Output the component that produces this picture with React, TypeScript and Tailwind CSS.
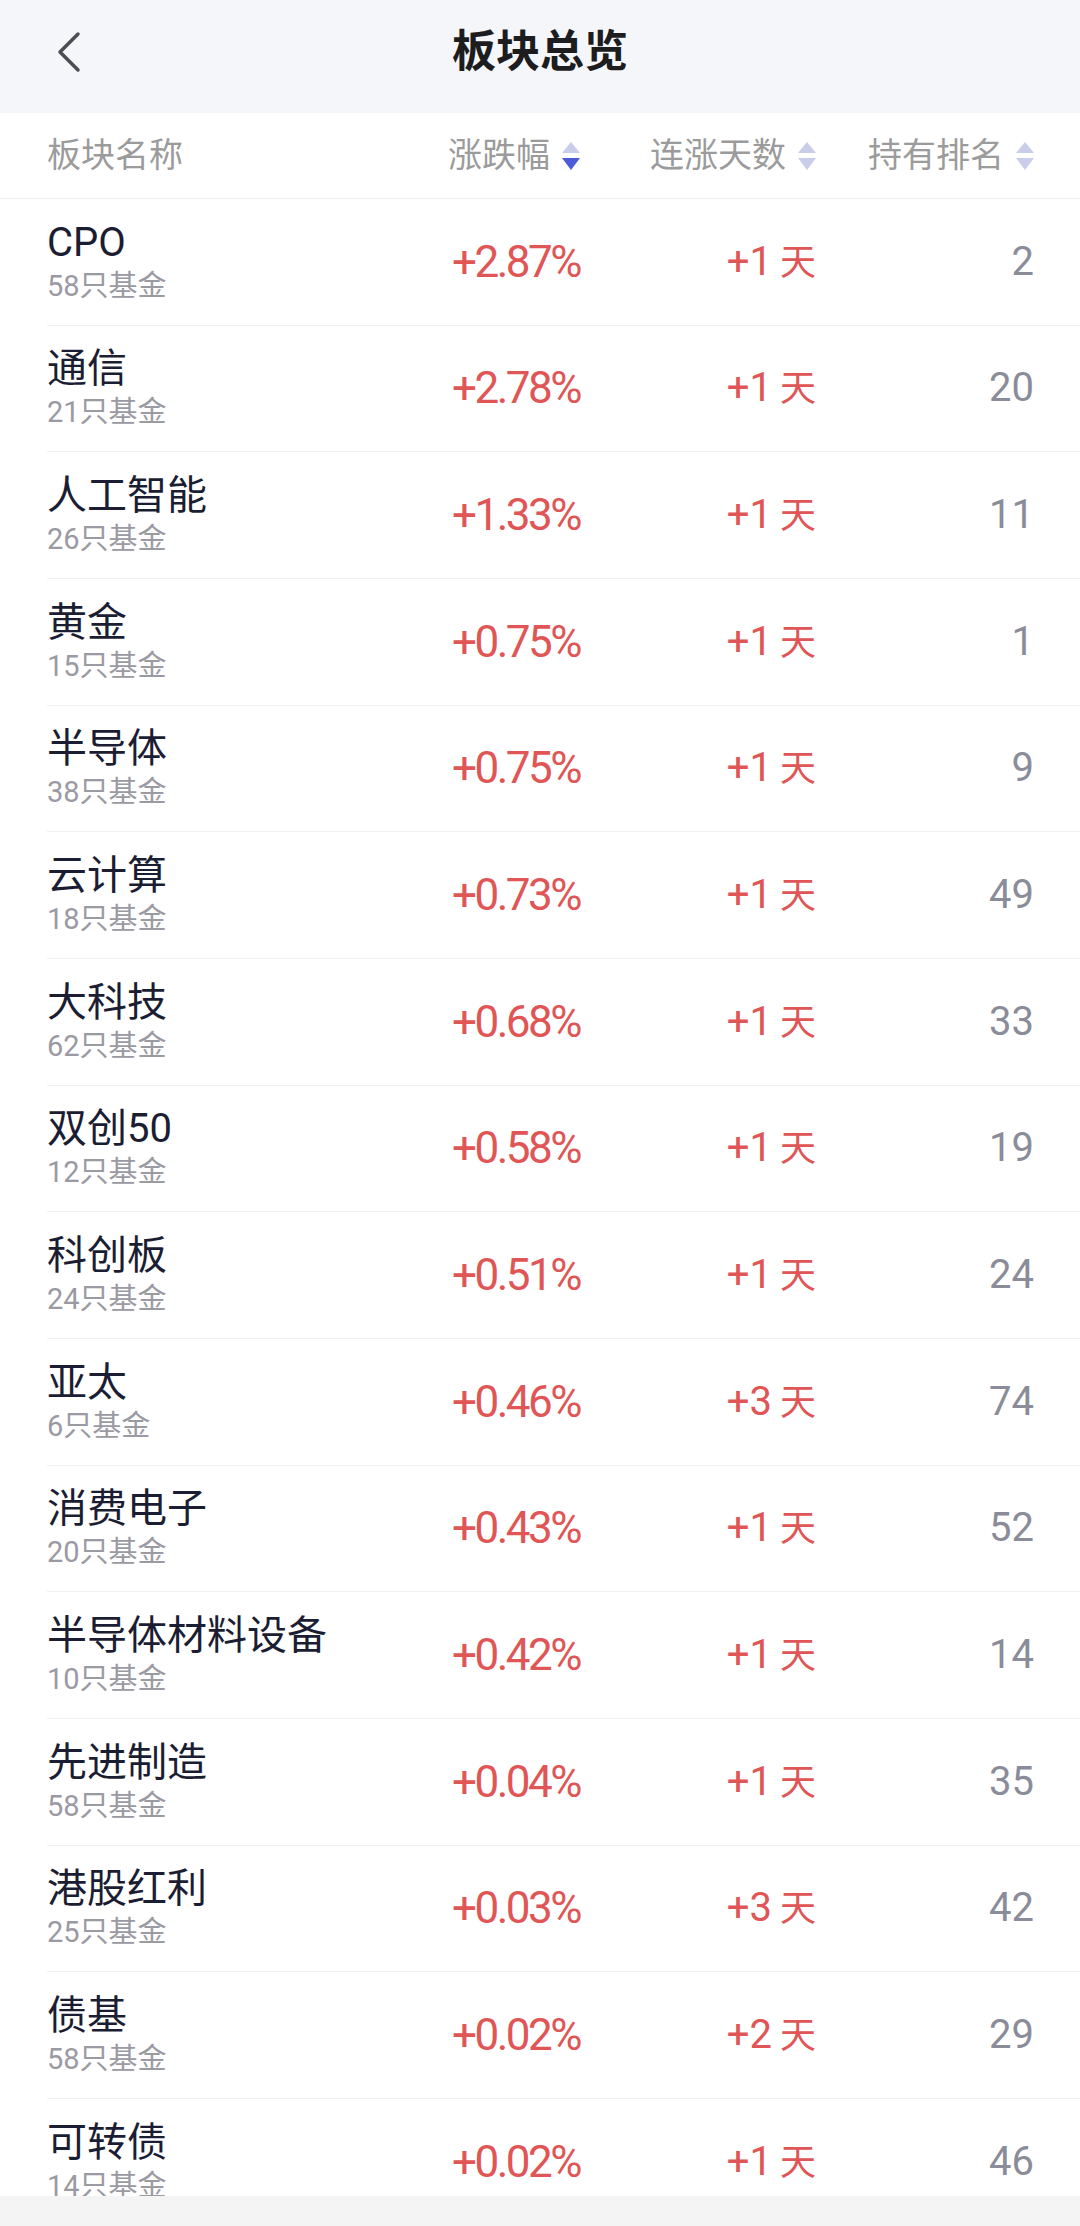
import React from "react";

type Sector = {
  name: string;
  funds: number;
  change: string;
  days: number;
  rank: number;
};

const sectors: Sector[] = [
  { name: "CPO", funds: 58, change: "+2.87%", days: 1, rank: 2 },
  { name: "通信", funds: 21, change: "+2.78%", days: 1, rank: 20 },
  { name: "人工智能", funds: 26, change: "+1.33%", days: 1, rank: 11 },
  { name: "黄金", funds: 15, change: "+0.75%", days: 1, rank: 1 },
  { name: "半导体", funds: 38, change: "+0.75%", days: 1, rank: 9 },
  { name: "云计算", funds: 18, change: "+0.73%", days: 1, rank: 49 },
  { name: "大科技", funds: 62, change: "+0.68%", days: 1, rank: 33 },
  { name: "双创50", funds: 12, change: "+0.58%", days: 1, rank: 19 },
  { name: "科创板", funds: 24, change: "+0.51%", days: 1, rank: 24 },
  { name: "亚太", funds: 6, change: "+0.46%", days: 3, rank: 74 },
  { name: "消费电子", funds: 20, change: "+0.43%", days: 1, rank: 52 },
  { name: "半导体材料设备", funds: 10, change: "+0.42%", days: 1, rank: 14 },
  { name: "先进制造", funds: 58, change: "+0.04%", days: 1, rank: 35 },
  { name: "港股红利", funds: 25, change: "+0.03%", days: 3, rank: 42 },
  { name: "债基", funds: 58, change: "+0.02%", days: 2, rank: 29 },
  { name: "可转债", funds: 14, change: "+0.02%", days: 1, rank: 46 },
];

function SortIcon({ active }: { active?: boolean }) {
  return (
    <svg width="18" height="30" viewBox="0 0 18 30" className="shrink-0">
      <polygon points="9,1 18,12 0,12" fill="#c9cdea" />
      <polygon points="0,17 18,17 9,29" fill={active ? "#4b5cd8" : "#c9cdea"} />
    </svg>
  );
}

function HeadCell({ label, active }: { label: string; active?: boolean }) {
  return (
    <div className="flex items-center justify-end gap-[12px]">
      <span>{label}</span>
      <SortIcon active={active} />
    </div>
  );
}

export default function App() {
  return (
    <div className="w-[1080px] h-[2226px] flex flex-col bg-white overflow-hidden font-['Roboto','Noto_Sans_CJK_SC',sans-serif]">
      {/* title bar */}
      <div className="h-[113px] shrink-0 bg-[#f5f6fa] grid grid-cols-[1fr_auto_1fr] items-center pb-[10px]">
        <div className="pl-[56px]">
          <svg width="26" height="42" viewBox="0 0 26 42">
            <polyline
              points="22,3 4,21 22,39"
              fill="none"
              stroke="#4b4c55"
              strokeWidth="3.5"
              strokeLinecap="round"
              strokeLinejoin="round"
            />
          </svg>
        </div>
        <div className="text-[44px] font-bold text-[#1d1d1f] leading-none">板块总览</div>
        <div />
      </div>

      {/* column header */}
      <div className="h-[86px] shrink-0 border-b border-[#eeeeee] grid grid-cols-[1fr_180px_236px_218px] items-center pl-[47px] pr-[46px] text-[34px] text-[#9b9b9b]">
        <div>板块名称</div>
        <HeadCell label="涨跌幅" active />
        <HeadCell label="连涨天数" />
        <HeadCell label="持有排名" />
      </div>

      {/* list */}
      <div className="flex-1 overflow-hidden pl-[47px]">
        {sectors.map((s) => (
          <div
            key={s.name}
            className="h-[126.67px] border-b border-[#f1f1f3] grid grid-cols-[1fr_180px_236px_218px] items-center pr-[46px]"
          >
            <div className="flex flex-col">
              <div className="text-[40px] leading-[48px] text-[#1b1d33]">{s.name}</div>
              <div className="text-[29px] leading-[38px] text-[#9a9aa3]">{s.funds}只基金</div>
            </div>
            <div className="text-right text-[44px] tracking-[-2.5px] text-[#e05555]">
              {s.change}
            </div>
            <div className="text-right text-[#e05555]">
              <span className="text-[40px]">+{s.days}</span>
              <span className="text-[36px] ml-[8px]">天</span>
            </div>
            <div className="text-right text-[40px] text-[#8b8c99]">{s.rank}</div>
          </div>
        ))}
      </div>

      {/* bottom bar */}
      <div className="h-[30px] shrink-0 bg-[#f4f4f4]" />
    </div>
  );
}
